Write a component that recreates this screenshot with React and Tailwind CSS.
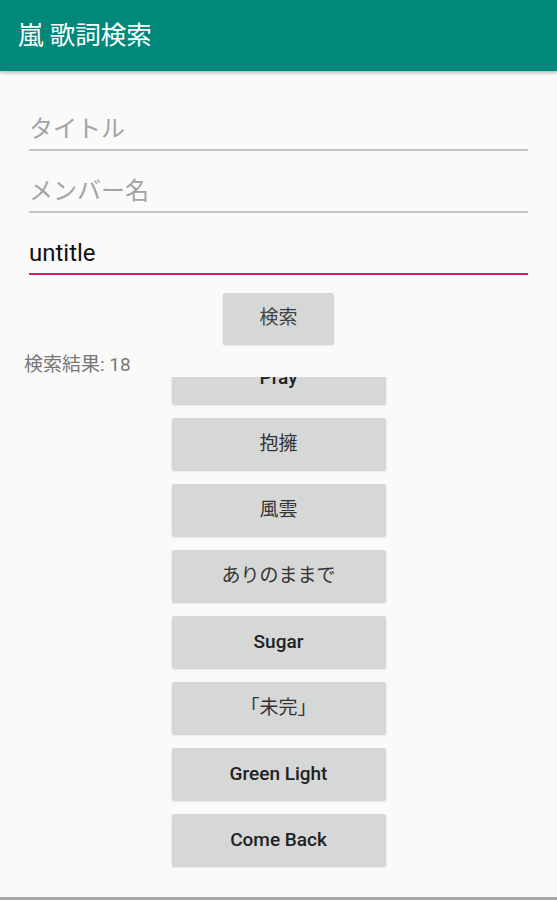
import React from 'react';

const songs = [
  { title: 'Pray', latin: true },
  { title: '抱擁', latin: false },
  { title: '風雲', latin: false },
  { title: 'ありのままで', latin: false },
  { title: 'Sugar', latin: true },
  { title: '「未完」', latin: false },
  { title: 'Green Light', latin: true },
  { title: 'Come Back', latin: true },
];

const font = { fontFamily: 'Roboto, "Noto Sans CJK JP", sans-serif' };

function Field({ text, placeholder, active }) {
  return (
    <div
      className={`h-[62px] flex items-end pb-[5px] border-b-2 ${active ? 'border-[#d81b60]' : 'border-[#c4c4c4]'}`}
    >
      <span
        className={`text-[24px] leading-[30px] ${placeholder ? 'text-[#a3a3a3]' : 'text-[#111]'}`}
      >
        {text}
      </span>
    </div>
  );
}

export default function App() {
  return (
    <div className="w-[557px] h-[900px] bg-[#fafafa] overflow-hidden flex flex-col" style={font}>
      <header className="h-[71px] shrink-0 bg-[#00897b] flex items-center pl-[18px] shadow-[0_2px_3px_rgba(0,0,0,0.25)] relative z-10">
        <h1 className="text-white text-[25.5px] leading-none">嵐 歌詞検索</h1>
      </header>

      <div className="px-[29px] pt-[18px]">
        <Field text="タイトル" placeholder />
        <Field text="メンバー名" placeholder />
        <Field text="untitle" active />
      </div>

      <div className="flex justify-center mt-[18px]">
        <button className="w-[111px] h-[51px] bg-[#d6d7d7] rounded-[2px] shadow-[0_1px_2px_rgba(0,0,0,0.2)] text-[19px] text-[#444]">
          検索
        </button>
      </div>

      <div className="h-[33px] pt-[10px] pl-[24px] text-[19px] leading-[22px] text-[#777]">
        検索結果: 18
      </div>

      <div className="h-[521px] overflow-hidden">
        <div className="-mt-[25px] flex flex-col items-center gap-[14px]">
          {songs.map((s) => (
            <button
              key={s.title}
              className={`w-[214px] h-[52px] shrink-0 bg-[#d6d7d7] rounded-[2px] shadow-[0_1px_2px_rgba(0,0,0,0.2)] text-[19px] ${s.latin ? 'font-medium text-[#222]' : 'font-normal text-[#333]'}`}
            >
              {s.title}
            </button>
          ))}
        </div>
      </div>

      <div className="h-[3px] bg-[#a8a8a8]" />
    </div>
  );
}
